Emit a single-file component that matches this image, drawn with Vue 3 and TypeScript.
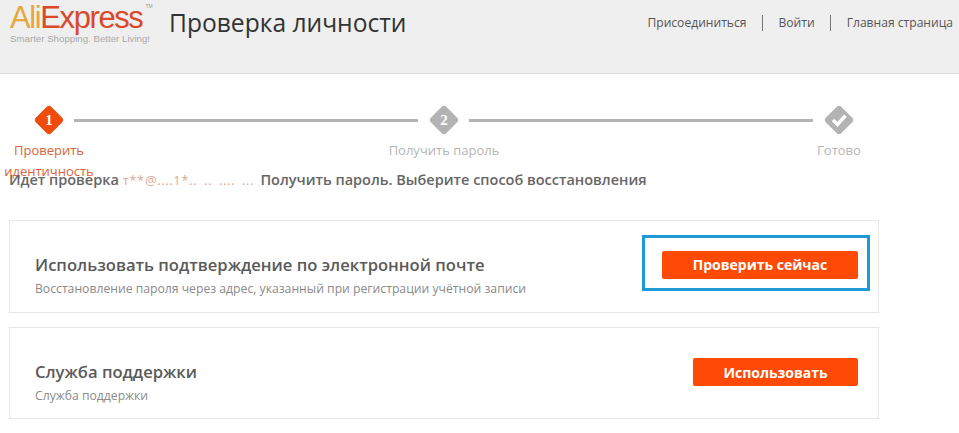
<template>
  <div class="page">
    <header class="top">
      <div class="logo">
        <div class="logo-word"><span class="ali">Ali</span><span class="express">Express</span><sup class="tm">TM</sup></div>
        <div class="tagline">Smarter Shopping. Better Living!</div>
      </div>
      <h1 class="title">Проверка личности</h1>
      <nav class="links">
        <a v-for="link in links" :key="link">{{ link }}</a>
      </nav>
    </header>

    <div class="track">
      <template v-for="(step, i) in steps" :key="step.label">
        <svg class="diamond" width="30" height="30" viewBox="0 0 30 30">
          <path d="M15 4.5 L25.5 15 L15 25.5 L4.5 15 Z" :fill="step.color" :stroke="step.color" stroke-width="7" stroke-linejoin="round" />
          <path v-if="step.check" d="M9 15 L13.5 19.5 L21.5 10.5" fill="none" stroke="#fff" stroke-width="3.4" />
          <text v-else x="15" y="20" text-anchor="middle" class="num">{{ i + 1 }}</text>
        </svg>
        <div v-if="i < steps.length - 1" class="line"></div>
      </template>
    </div>
    <div class="labels">
      <div v-for="step in steps" :key="step.label" class="label" :class="{ active: step.active }">{{ step.label }}</div>
    </div>

    <p class="intro">Идет проверка <span class="masked">т**@....1*.. .. .... ...</span> Получить пароль. Выберите способ восстановления</p>

    <section class="card">
      <div class="card-text">
        <h2>Использовать подтверждение по электронной почте</h2>
        <p>Восстановление пароля через адрес, указанный при регистрации учётной записи</p>
      </div>
      <div class="highlight">
        <button class="btn wide">Проверить сейчас</button>
      </div>
    </section>

    <section class="card second">
      <div class="card-text">
        <h2>Служба поддержки</h2>
        <p>Служба поддержки</p>
      </div>
      <button class="btn">Использовать</button>
    </section>
  </div>
</template>

<script setup lang="ts">
const links = ['Присоединиться', 'Войти', 'Главная страница']

const steps = [
  { label: 'Проверить идентичность', color: '#f04a0c', active: true, check: false },
  { label: 'Получить пароль', color: '#b3b3b3', active: false, check: false },
  { label: 'Готово', color: '#b3b3b3', active: false, check: true }
]
</script>

<style>
html, body { background: #fff; }
</style>

<style scoped>
.page { width: 959px; height: 433px; overflow: hidden; font-family: "Open Sans", "Noto Sans", sans-serif; color: #666; }
.top { height: 73px; background: #efefef; border-bottom: 1px solid #e0e0e0; display: flex; align-items: flex-start; padding-left: 10px; }
.logo { width: 159px; flex-shrink: 0; padding-top: 2px; }
.logo-word { font-family: "Liberation Sans", sans-serif; font-size: 31px; line-height: 31px; letter-spacing: -1.4px; white-space: nowrap; }
.ali { color: #e9a63c; }
.express { color: #d9492a; }
.tm { font-size: 5px; letter-spacing: 0; color: #999; vertical-align: 20px; line-height: 0; margin-left: 3px; }
.tagline { font-family: "Liberation Sans", sans-serif; font-size: 9.7px; color: #a9a9a9; line-height: 12px; white-space: nowrap; }
.title { margin: 5px 0 0; font-size: 24.6px; line-height: 36px; font-weight: 400; color: #333; white-space: nowrap; }
.links { margin-left: auto; padding: 15px 6px 0 0; display: flex; font-size: 12.1px; line-height: 16px; color: #555; }
.links a { padding: 0 15px 0 16px; border-left: 1px solid #777; white-space: nowrap; }
.links a:first-child { border-left: none; }
.links a:last-child { padding-right: 0; }

.track { display: flex; align-items: center; margin: 31px 0 0 34px; width: 835px; }
.diamond { flex-shrink: 0; }
.num { font-family: "Liberation Serif", serif; font-weight: 700; font-size: 15px; fill: #fff; }
.line { height: 3px; background: #b3b3b3; width: 344px; margin: 0 11px 0 10px; }
.labels { display: flex; gap: 305px; margin: 5px 0 0 4px; height: 21px; }
.label { width: 90px; flex-shrink: 0; display: flex; justify-content: center; text-align: center; font-size: 13px; line-height: 21px; color: #b5b5b5; white-space: nowrap; }
.label.active { color: #d9643c; white-space: normal; }

.intro { margin: 9px 0 0 9px; font-size: 14.5px; line-height: 20px; font-weight: 600; color: #666; white-space: nowrap; }
.masked { display: inline-block; width: 134px; overflow: hidden; vertical-align: bottom; color: #d9a794; font-weight: 400; font-size: 13px; letter-spacing: 0.6px; word-spacing: 3px; }

.card { margin: 30px 0 0 9px; width: 870px; height: 93px; box-sizing: border-box; border: 1px solid #e6e6e6; display: flex; align-items: center; justify-content: space-between; padding: 0 20px 0 25px; }
.card.second { margin-top: 14px; height: 92px; }
.card-text { padding-top: 18px; }
.card-text h2 { margin: 0; font-size: 16.6px; line-height: 24px; font-weight: 600; color: #5a5a5a; white-space: nowrap; }
.card-text p { margin: 3px 0 0; font-size: 12.2px; line-height: 18px; color: #8a8a8a; white-space: nowrap; }
.highlight { border: 3px solid #1e9bd6; width: 228px; height: 56px; box-sizing: border-box; display: flex; align-items: center; justify-content: flex-end; padding: 4px 9px 0 0; margin: -8px -12px 0 0; }
.btn { width: 165px; height: 28px; border: none; border-radius: 2px; background: #ff4a05; color: #fff; font-family: inherit; font-size: 14px; font-weight: 700; padding: 0; }
.second .btn { margin-bottom: 2px; }
.btn.wide { width: 196px; }
</style>
